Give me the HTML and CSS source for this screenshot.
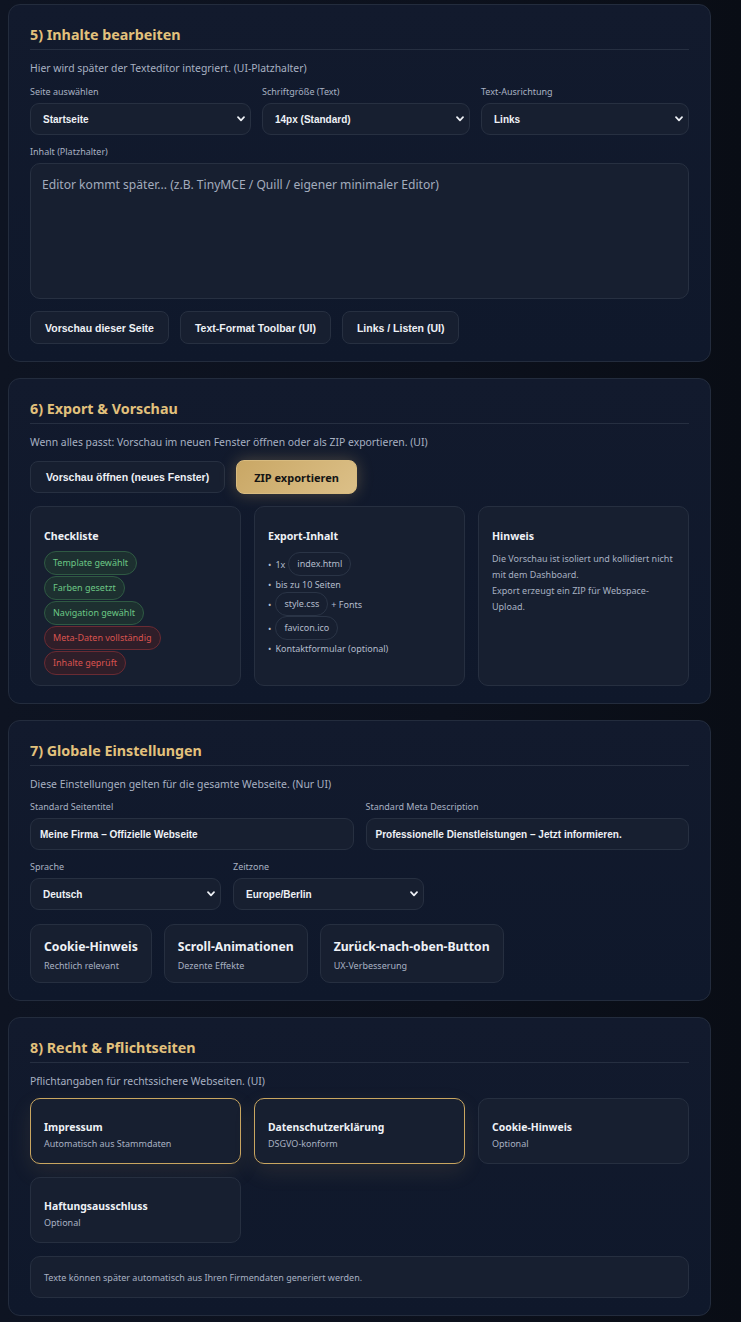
FILE: index.html
```html
<!DOCTYPE html>
<html lang="de">
<head>
<meta charset="utf-8">
<title>Dashboard</title>
<link rel="stylesheet" href="styles.css">
</head>
<body>
<main class="page">

<section class="card">
  <h2 class="card-title">5) Inhalte bearbeiten</h2>
  <p class="desc">Hier wird später der Texteditor integriert. (UI-Platzhalter)</p>
  <div class="grid3-form">
    <div class="field">
      <label class="label">Seite auswählen</label>
      <div class="select"><span>Startseite</span><svg class="chev" viewBox="0 0 8 6"><path d="M1 1.2 L4 4.4 L7 1.2" /></svg></div>
    </div>
    <div class="field">
      <label class="label">Schriftgröße (Text)</label>
      <div class="select"><span>14px (Standard)</span><svg class="chev" viewBox="0 0 8 6"><path d="M1 1.2 L4 4.4 L7 1.2" /></svg></div>
    </div>
    <div class="field">
      <label class="label">Text-Ausrichtung</label>
      <div class="select"><span>Links</span><svg class="chev" viewBox="0 0 8 6"><path d="M1 1.2 L4 4.4 L7 1.2" /></svg></div>
    </div>
  </div>
  <div class="field field-full">
    <label class="label">Inhalt (Platzhalter)</label>
    <div class="textarea">Editor kommt später... (z.B. TinyMCE / Quill / eigener minimaler Editor)</div>
  </div>
  <div class="btn-row">
    <button class="btn">Vorschau dieser Seite</button>
    <button class="btn">Text-Format Toolbar (UI)</button>
    <button class="btn">Links / Listen (UI)</button>
  </div>
</section>

<section class="card">
  <h2 class="card-title">6) Export &amp; Vorschau</h2>
  <p class="desc">Wenn alles passt: Vorschau im neuen Fenster öffnen oder als ZIP exportieren. (UI)</p>
  <div class="btn-row btn-row-tight">
    <button class="btn btn-lg">Vorschau öffnen (neues Fenster)</button>
    <button class="btn btn-lg btn-gold">ZIP exportieren</button>
  </div>
  <div class="grid3 grid3-export">
    <div class="box box-tall">
      <h3 class="box-title">Checkliste</h3>
      <div class="pills">
        <span class="pill pill-ok">Template gewählt</span>
        <span class="pill pill-ok">Farben gesetzt</span>
        <span class="pill pill-ok">Navigation gewählt</span>
        <span class="pill pill-bad">Meta-Daten vollständig</span>
        <span class="pill pill-bad">Inhalte geprüft</span>
      </div>
    </div>
    <div class="box box-tall">
      <h3 class="box-title">Export-Inhalt</h3>
      <ul class="list">
        <li>1x <span class="chip">index.html</span></li>
        <li>bis zu 10 Seiten</li>
        <li><span class="chip">style.css</span> + Fonts</li>
        <li><span class="chip">favicon.ico</span></li>
        <li>Kontaktformular (optional)</li>
      </ul>
    </div>
    <div class="box box-tall">
      <h3 class="box-title">Hinweis</h3>
      <p class="note">Die Vorschau ist isoliert und kollidiert nicht mit dem Dashboard.<br>Export erzeugt ein ZIP für Webspace-Upload.</p>
    </div>
  </div>
</section>

<section class="card">
  <h2 class="card-title">7) Globale Einstellungen</h2>
  <p class="desc">Diese Einstellungen gelten für die gesamte Webseite. (Nur UI)</p>
  <div class="grid2-form">
    <div class="field">
      <label class="label">Standard Seitentitel</label>
      <div class="input">Meine Firma – Offizielle Webseite</div>
    </div>
    <div class="field">
      <label class="label">Standard Meta Description</label>
      <div class="input">Professionelle Dienstleistungen – Jetzt informieren.</div>
    </div>
  </div>
  <div class="grid-small">
    <div class="field">
      <label class="label">Sprache</label>
      <div class="select"><span>Deutsch</span><svg class="chev" viewBox="0 0 8 6"><path d="M1 1.2 L4 4.4 L7 1.2" /></svg></div>
    </div>
    <div class="field">
      <label class="label">Zeitzone</label>
      <div class="select"><span>Europe/Berlin</span><svg class="chev" viewBox="0 0 8 6"><path d="M1 1.2 L4 4.4 L7 1.2" /></svg></div>
    </div>
  </div>
  <div class="toggle-row">
    <div class="toggle">
      <div class="toggle-title">Cookie-Hinweis</div>
      <div class="toggle-sub">Rechtlich relevant</div>
    </div>
    <div class="toggle">
      <div class="toggle-title">Scroll-Animationen</div>
      <div class="toggle-sub">Dezente Effekte</div>
    </div>
    <div class="toggle">
      <div class="toggle-title">Zurück-nach-oben-Button</div>
      <div class="toggle-sub">UX-Verbesserung</div>
    </div>
  </div>
</section>

<section class="card">
  <h2 class="card-title">8) Recht &amp; Pflichtseiten</h2>
  <p class="desc">Pflichtangaben für rechtssichere Webseiten. (UI)</p>
  <div class="grid3 grid3-rows">
    <div class="box legal active">
      <h3 class="box-title">Impressum</h3>
      <div class="legal-sub">Automatisch aus Stammdaten</div>
    </div>
    <div class="box legal active">
      <h3 class="box-title">Datenschutzerklärung</h3>
      <div class="legal-sub">DSGVO-konform</div>
    </div>
    <div class="box legal">
      <h3 class="box-title">Cookie-Hinweis</h3>
      <div class="legal-sub">Optional</div>
    </div>
    <div class="box legal">
      <h3 class="box-title">Haftungsausschluss</h3>
      <div class="legal-sub">Optional</div>
    </div>
  </div>
  <div class="box info">Texte können später automatisch aus Ihren Firmendaten generiert werden.</div>
</section>

</main>
</body>
</html>
```

FILE: styles.css
```css
* { box-sizing: border-box; }
html, body { margin: 0; padding: 0; }
body {
  background: linear-gradient(90deg, #0e1422 0%, #0c111d 60%, #090d15 100%);
  font-family: "Noto Sans", "Open Sans", sans-serif;
  color: #e6e9ef;
  min-height: 1322px;
}
.page {
  width: 703px;
  margin-left: 8px;
  padding-top: 4px;
  display: flex;
  flex-direction: column;
  gap: 16px;
}
.card {
  background: linear-gradient(180deg, #121a2d 0%, #0f182b 100%);
  border: 1px solid #232c3d;
  border-radius: 12px;
  padding: 21px 21px 17px;
}
.card-title {
  margin: 0;
  font-size: 14.3px;
  line-height: 18px;
  font-weight: 700;
  color: #e2c17c;
  padding-bottom: 5px;
  border-bottom: 1px solid #262f41;
}
.desc {
  margin: 10px 0 0;
  font-size: 10.4px;
  line-height: 16px;
  color: #a8b1c2;
}
.label {
  display: block;
  font-size: 9px;
  line-height: 13px;
  color: #a8b1c2;
  margin-bottom: 5px;
}
.grid3-form {
  margin-top: 9px;
  display: grid;
  grid-template-columns: 221px 208px 208px;
  gap: 11px;
}
.select, .input {
  height: 32px;
  border: 1px solid #273041;
  border-radius: 9px;
  background: #171f30;
  display: flex;
  align-items: center;
  justify-content: space-between;
  padding: 0 4px 0 12px;
  font-family: "Liberation Sans", Arial, sans-serif;
  font-weight: 700;
  font-size: 10px;
  color: #eef1f6;
}
.input { padding-left: 9px; }
.chev {
  width: 8px;
  height: 6px;
  margin-right: 1px;
  fill: none;
  stroke: #eef1f6;
  stroke-width: 1.7;
  stroke-linecap: round;
  stroke-linejoin: round;
}
.field-full { margin-top: 10px; }
.textarea {
  height: 136px;
  border: 1px solid #273041;
  border-radius: 10px;
  background: #171f30;
  padding: 12px 11px;
  font-size: 12.1px;
  line-height: 17px;
  color: #a3acbd;
}
.btn-row {
  margin-top: 12px;
  display: flex;
  gap: 11px;
}
.btn {
  height: 33px;
  padding: 0 14px;
  border: 1px solid #273041;
  border-radius: 8px;
  background: #171f30;
  color: #eef1f6;
  font-family: "Liberation Sans", Arial, sans-serif;
  font-weight: 700;
  font-size: 10.5px;
}
.btn-row-tight { margin-top: 11px; }
.btn-lg { height: 32px; padding: 0 15px; }
.btn-gold {
  background: linear-gradient(135deg, #c9a765 0%, #dcc088 100%);
  border-color: #d8bb7f;
  color: #141414;
  box-shadow: 0 0 16px rgba(214, 180, 110, 0.30);
  height: 34px;
  margin-top: -1px;
  padding: 0 17px;
  font-family: "Noto Sans", "Open Sans", sans-serif;
  font-size: 11px;
}
.grid3 {
  display: grid;
  grid-template-columns: 211px 211px 211px;
  column-gap: 13px;
  row-gap: 13px;
}
.grid3-export { margin-top: 12px; }
.box {
  background: #171f30;
  border: 1px solid #262f40;
  border-radius: 10px;
  padding: 13px;
}
.box-tall { height: 180px; padding-top: 22px; }
.box-title {
  margin: 0;
  font-size: 10.6px;
  line-height: 15px;
  font-weight: 700;
  color: #eef1f6;
}
.pills {
  margin-top: 7px;
  display: flex;
  flex-direction: column;
  align-items: flex-start;
  gap: 1px;
}
.pill {
  display: inline-block;
  height: 24px;
  line-height: 22px;
  padding: 0 8px;
  border-radius: 12px;
  font-size: 9px;
  border: 1px solid;
}
.pill-ok {
  color: #6cc785;
  background: #1d3030;
  border-color: #2f5a43;
}
.pill-bad {
  color: #d9534f;
  background: #2f1e29;
  border-color: #6a2b33;
}
.list {
  list-style: none;
  margin: 8px 0 0;
  padding: 0;
  font-size: 9px;
  color: #b3bccb;
}
.list li {
  display: flex;
  align-items: center;
  gap: 3px;
  min-height: 16px;
}
.list li::before {
  content: "•";
  color: #b3bccb;
  margin-right: 1px;
}
.chip {
  display: inline-block;
  height: 24px;
  line-height: 22px;
  padding: 0 8px;
  border: 1px solid #2a3446;
  border-radius: 12px;
  color: #b3bccb;
}
.note {
  margin: 7px 0 0;
  font-size: 9px;
  line-height: 16px;
  color: #a8b1c2;
}
.grid2-form {
  margin-top: 8px;
  display: grid;
  grid-template-columns: 1fr 1fr;
  gap: 12px;
}
.grid-small {
  margin-top: 10px;
  display: grid;
  grid-template-columns: 191px 191px;
  gap: 12px;
}
.toggle-row {
  margin-top: 14px;
  display: flex;
  gap: 12px;
}
.toggle {
  background: #171f30;
  border: 1px solid #262f40;
  border-radius: 10px;
  padding: 13px 13px 12px;
  height: 59px;
}
.toggle-title {
  font-size: 12.2px;
  line-height: 17px;
  font-weight: 700;
  color: #eef1f6;
}
.toggle-sub {
  margin-top: 4px;
  font-size: 9px;
  line-height: 13px;
  color: #a8b1c2;
}
.grid3-rows { margin-top: 9px; }
.legal {
  height: 66px;
  padding-top: 21px;
}
.legal.active {
  border-color: #c9a660;
  box-shadow: 0 8px 22px rgba(214, 180, 110, 0.10);
}
.legal .box-title { font-size: 10.4px; }
.legal-sub {
  margin-top: 2px;
  font-size: 9px;
  line-height: 13px;
  color: #a8b1c2;
}
.info {
  margin-top: 13px;
  height: 42px;
  display: flex;
  align-items: center;
  font-size: 9px;
  color: #a8b1c2;
}
```
